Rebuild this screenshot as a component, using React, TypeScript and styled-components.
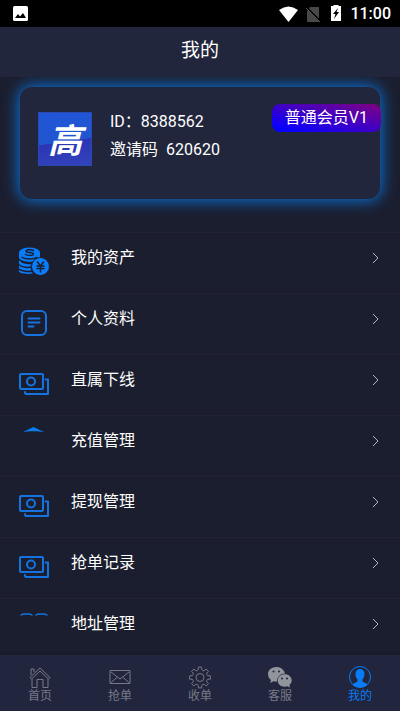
import React from "react";
import styled, { createGlobalStyle } from "styled-components";

const GlobalStyle = createGlobalStyle`
  *, *::before, *::after { box-sizing: border-box; }
  body {
    margin: 0;
    background: #1b1e2e;
    color: #fff;
    font: 400 16px/24px Roboto, "Noto Sans CJK SC", sans-serif;
  }
`;

const Screen = styled.div`
  height: 100vh;
  display: flex;
  flex-direction: column;
  background: #1b1e2e;
`;

const StatusBar = styled.div`
  flex: none;
  height: 27px;
  padding: 0 9px 0 13px;
  display: flex;
  align-items: center;
  justify-content: space-between;
  background: #000;
`;

const StatusGroup = styled.div`
  display: flex;
  align-items: center;
`;

const Clock = styled.span`
  margin-left: 9px;
  font-weight: 500;
`;

const Header = styled.header`
  flex: none;
  height: 50px;
  padding-bottom: 2px;
  display: flex;
  align-items: center;
  justify-content: center;
  background: #21263d;
`;

const Title = styled.h1`
  margin: 0;
  font-size: 19px;
  line-height: 28px;
  font-weight: 400;
`;

const Content = styled.main`
  flex: 1;
  min-height: 0;
  overflow-y: auto;
  scrollbar-width: none;
`;

const ProfileCard = styled.section`
  min-height: 112px;
  margin: 10px 20px 33px;
  padding: 17px 0 0 18px;
  display: flex;
  align-items: flex-start;
  background: #21263d;
  border-radius: 12px;
  box-shadow: 0 0 16px 1px #0a78e6;
`;

const Avatar = styled.div`
  flex: none;
  width: 54px;
  height: 54px;
  margin-top: 8px;
  display: flex;
  align-items: center;
  justify-content: center;
  border: 1px solid #2a49ae;
  background: linear-gradient(172deg, #2055d8 0%, #2156cf 54%, #2b35b5 55%, #3343bb 100%);
  font: italic 700 34px/52px "Noto Sans CJK SC", sans-serif;
`;

const Identity = styled.div`
  flex: 1;
  margin: 4px 0 0 18px;
  line-height: 28px;
  white-space: pre;
`;

const Badge = styled.span`
  flex: none;
  height: 28px;
  margin-right: -1px;
  padding: 0 13px;
  border-radius: 8px;
  background: linear-gradient(to top right, #0800ff 10%, #800080);
  line-height: 27px;
`;

const Menu = styled.nav`
  display: flex;
  flex-direction: column;
`;

const MenuRow = styled.a`
  flex: none;
  height: 61px;
  padding: 0 20px 0 18px;
  display: flex;
  align-items: flex-start;
  border-top: 1px solid #22232f;
  color: #fff;
  text-decoration: none;
`;

const MenuIcon = styled.svg`
  flex: none;
  width: 32px;
  height: 32px;
  margin: 13px 21px 0 0;
  overflow: visible;
  fill: none;
  stroke: #1473df;
  stroke-width: 2;
  stroke-linecap: round;
  stroke-linejoin: round;
`;

const MenuLabel = styled.span`
  flex: 1;
  margin-top: 13px;
`;

const Chevron = styled.svg`
  width: 8px;
  height: 12px;
  margin-top: 19px;
  fill: none;
  stroke: #b5b7bf;
`;

const TabBar = styled.nav`
  flex: none;
  height: 56px;
  padding-top: 11px;
  display: grid;
  grid-template-columns: repeat(5, 1fr);
  background: #21263e;
  box-shadow: 0 -1px 3px #171b29;
`;

const Tab = styled.a<{ $active?: boolean }>`
  display: flex;
  flex-direction: column;
  align-items: center;
  color: ${(p) => (p.$active ? "#087bf5" : "#777a86")};
  font-size: 12px;
  line-height: 16px;
  text-decoration: none;
`;

const TabIcon = styled.svg`
  width: 24px;
  height: 22px;
  overflow: visible;
  fill: none;
  stroke: currentColor;
  stroke-width: 1;
`;

const Bills = () => (
  <g>
    <rect x="2" y="6" width="23" height="15" rx="1" />
    <circle cx="13" cy="13.500" r="4" />
    <path d="M27.500 11.500H30V26H8q-1 0-1-2" />
  </g>
);

const menuIcons = {
  assets: (
    <g stroke="none" fill="#087df7">
      <ellipse cx="11.500" cy="6.500" rx="10.500" ry="5" />
      <path d="M1 7v5c3 5 18 5 21 0V7z" />
      <path d="M1 14.500c3 2.700 8 3.100 12.500 2.700l-.9 3.300C8 21 3 20 1 18z" />
      <path d="M1 19.500c3 2.500 7 2.900 11.500 2.600l.8 2.400C8 25 3 24 1 22.500z" />
      <path d="M1 24c3 2.100 8 2.500 13 2.200l.8 1.300C9 28.500 2 27.500 1 25.500z" />
      <path
        d="M15.500 4.500c-2.500-1.200-7.500-1-7.500.7 0 1.900 7.500.7 7.500 2.800 0 1.700-5.500 1.900-8 .4M4 11.300c4 2.200 11 2.200 15 0M4 16.200c3 1.300 6 1.600 9 1.300"
        fill="none"
        stroke="#1b1e2e"
        strokeWidth="1.400"
      />
      <circle cx="22.500" cy="20.500" r="9" stroke="#1b1e2e" strokeWidth="1" />
      <path
        d="m19.500 16 3 4 3-4m-3 4v6M19 20h7m-7 2.500h7"
        stroke="#1b1e2e"
        strokeWidth="1.500"
        fill="none"
      />
    </g>
  ),
  profile: (
    <g>
      <rect x="4" y="4" width="24" height="24" rx="5" />
      <path d="M10.500 11.500h11m-11 4h11m-11 4h5" />
    </g>
  ),
  bills: <Bills />,
  recharge: <path d="M5 3 15.500-2 26 3l-7-.8h-7z" fill="#087df7" stroke="none" />,
  address: <path d="M3 3Q4.500 2 6.500 2h4q2 0 3.500 1M18 3q1.500-1 3.500-1h4q2 0 3.500 1" strokeWidth="1.500" />,
};

const menuItems: { label: string; icon: keyof typeof menuIcons }[] = [
  { label: "我的资产", icon: "assets" },
  { label: "个人资料", icon: "profile" },
  { label: "直属下线", icon: "bills" },
  { label: "充值管理", icon: "recharge" },
  { label: "提现管理", icon: "bills" },
  { label: "抢单记录", icon: "bills" },
  { label: "地址管理", icon: "address" },
];

const gearPath = Array.from({ length: 8 }, (_, i) => {
  const point = (deg: number, r: number) => {
    const a = ((i * 45 + deg) * Math.PI) / 180;
    return `${(12 + r * Math.sin(a)).toFixed(2)} ${(11.5 - r * Math.cos(a)).toFixed(2)}`;
  };
  return `${i ? "L" : "M"}${point(-13, 8)}L${point(-9, 10.5)}L${point(9, 10.5)}L${point(13, 8)}L${point(22.5, 7.3)}`;
}).join("") + "Z";

const tabs = [
  {
    label: "首页",
    icon: (
      <g>
        <path d="M2 11.500 12 2l10 9.500-1.500 1.500L12 5l-8.500 8z" />
        <path d="M4 13v8.500h5v-8h6v8h5V13M3 9V3h3v3" />
      </g>
    ),
  },
  {
    label: "抢单",
    icon: <path d="M2 4.500h20v13H2zM3 6l9 7 9-7M3 16.500l6-5m12 5-6-5" />,
  },
  {
    label: "收单",
    icon: (
      <g>
        <path d={gearPath} />
        <circle cx="12" cy="11.500" r="4" />
      </g>
    ),
  },
  {
    label: "客服",
    icon: (
      <g fill="#92949b" stroke="none">
        <path d="M8.500 1C3.500 1 0 4 0 8c0 2.500 1 4.500 3 6l-.8 3 3.300-1.800c1 .3 2 .4 3.500.3 0-5 3.500-8 8-8C16 3.500 12.500 1 8.500 1z" />
        <path d="M16.700 8.300c-4 0-7 2.700-7 6.200s3 6.200 7 6.200c1 0 2-.2 2.800-.5L22 21.500l-.6-2.500c1.400-1.100 2.300-2.700 2.300-4.500 0-3.500-3-6.200-7-6.200z" />
        <g fill="#21263e">
          <circle cx="5.500" cy="5.500" r="1" />
          <circle cx="11" cy="5.500" r="1" />
          <circle cx="14" cy="12.500" r="1" />
          <circle cx="19" cy="12.500" r="1" />
        </g>
      </g>
    ),
  },
  {
    label: "我的",
    icon: (
      <g>
        <circle cx="12" cy="11" r="10.500" />
        <path
          d="M12 3c-3 0-4.500 2-4.500 5 0 2.500.8 4 2 5.500v2L4.500 18.200c3.500 4.400 11.500 4.400 15 0l-5-2.700v-2c1.200-1.500 2-3 2-5.500 0-3-1.500-5-4.500-5z"
          fill="currentColor"
          stroke="none"
        />
      </g>
    ),
  },
];

export default function App() {
  return (
    <Screen>
      <GlobalStyle />
      <StatusBar>
        <svg width="15" height="15" viewBox="0 0 15 15" aria-hidden="true">
          <rect width="15" height="15" rx="1.500" fill="#fff" />
          <path d="m2 12 3-4 2 2.500L10 7l3 5z" fill="#000" />
        </svg>
        <StatusGroup>
          <svg width="62" height="18" viewBox="0 0 62 18" aria-hidden="true">
            <path d="M0 5q9.500-7 19 0L9.500 17z" fill="#fff" />
            <path d="m31 2h9v15H28V6z" fill="#484848" />
            <path d="m27 2 14 14" stroke="#000" strokeWidth="2" />
            <path d="m27 3 14 14" stroke="#555" strokeWidth="1" />
            <path d="M52 1h2.500V0h5v1H62v15H52z" fill="#fff" />
            <path d="m59 3-5 6h2.500L55 14l5-7h-2.500z" fill="#000" />
          </svg>
          <Clock>11:00</Clock>
        </StatusGroup>
      </StatusBar>
      <Header>
        <Title>我的</Title>
      </Header>
      <Content>
        <ProfileCard>
          <Avatar>高</Avatar>
          <Identity>
            <div>ID：8388562</div>
            <div>{"邀请码  620620"}</div>
          </Identity>
          <Badge>普通会员V1</Badge>
        </ProfileCard>
        <Menu>
          {menuItems.map(({ label, icon }) => (
            <MenuRow href="#" key={label}>
              <MenuIcon viewBox="0 0 32 32" aria-hidden="true">
                {menuIcons[icon]}
              </MenuIcon>
              <MenuLabel>{label}</MenuLabel>
              <Chevron viewBox="0 0 8 12" aria-hidden="true">
                <path d="m1 1 5 5-5 5" />
              </Chevron>
            </MenuRow>
          ))}
        </Menu>
      </Content>
      <TabBar>
        {tabs.map(({ label, icon }) => (
          <Tab href="#" key={label} $active={label === "我的"}>
            <TabIcon viewBox="0 0 24 22" aria-hidden="true">
              {icon}
            </TabIcon>
            {label}
          </Tab>
        ))}
      </TabBar>
    </Screen>
  );
}
